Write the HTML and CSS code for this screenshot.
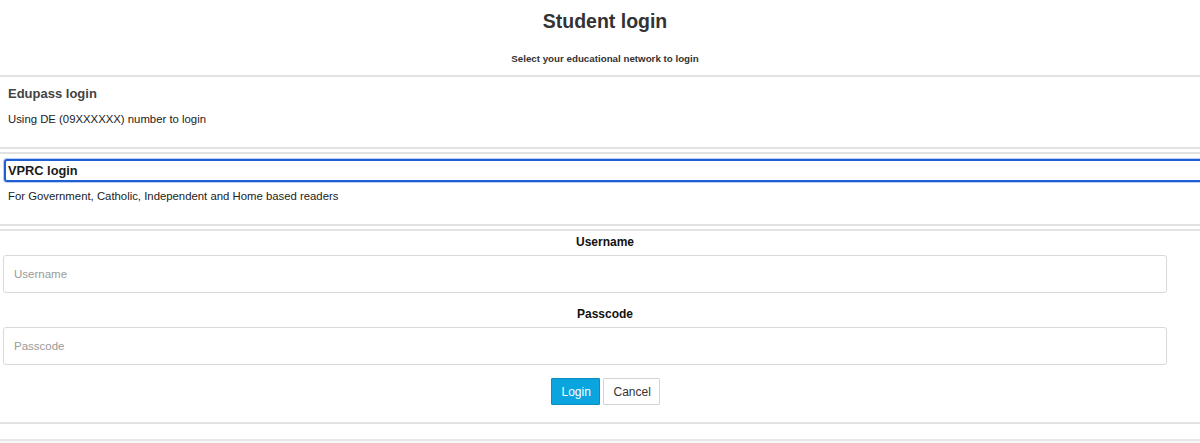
FILE: index.html
```html
<!DOCTYPE html>
<html lang="en">
<head>
<meta charset="utf-8">
<title>Student login</title>
<link rel="stylesheet" href="styles.css">
</head>
<body>
<div class="page">
  <header class="head">
    <h1 class="title">Student login</h1>
    <p class="subtitle">Select your educational network to login</p>
  </header>

  <section class="network">
    <h2 class="network-title">Edupass login</h2>
    <p class="network-desc">Using DE (09XXXXXX) number to login</p>
  </section>

  <section class="network network-active">
    <h2 class="network-title network-title-focus">VPRC login</h2>
    <p class="network-desc">For Government, Catholic, Independent and Home based readers</p>
  </section>

  <section class="login-form">
    <label class="field-label" for="username">Username</label>
    <input class="field-input" id="username" type="text" placeholder="Username">
    <label class="field-label field-label-second" for="passcode">Passcode</label>
    <input class="field-input" id="passcode" type="password" placeholder="Passcode">
    <div class="actions">
      <button class="btn btn-primary" type="button">Login</button>
      <button class="btn btn-default" type="button">Cancel</button>
    </div>
  </section>

  <div class="footer-rule"></div>
</div>
</body>
</html>
```

FILE: styles.css
```css
html {
  overflow-x: hidden;
}

body {
  margin: 0;
  background: #ffffff;
  font-family: "Liberation Sans", Arial, sans-serif;
  color: #222222;
}

.page {
  width: 1210px;
}

.head {
  padding-top: 9px;
  text-align: center;
}

.title {
  margin: 0;
  font-size: 19.5px;
  line-height: 24px;
  font-weight: bold;
  color: #333333;
}

.subtitle {
  margin: 19px 0 0;
  padding-bottom: 9px;
  font-size: 9.75px;
  line-height: 14px;
  font-weight: bold;
  color: #333333;
}

.network {
  border-top: 2px solid #e2e2e2;
  border-bottom: 2px solid #e2e2e2;
  padding: 9px 0 0;
  height: 61px;
  box-sizing: content-box;
}

.network + .network,
.network + .login-form {
  margin-top: 3px;
}

.network-title {
  margin: 0 0 0 8px;
  font-size: 13px;
  line-height: 16px;
  font-weight: bold;
  color: #444444;
}

.network-desc {
  margin: 10px 0 0 8px;
  font-size: 11.35px;
  line-height: 14px;
  color: #222222;
}

.network-active {
  padding-top: 5px;
  height: 65px;
}

.network-title-focus {
  margin-left: 4px;
  padding-left: 2px;
  height: 19px;
  line-height: 19px;
  font-size: 12.8px;
  border: 2px solid #1e5fd4;
  border-radius: 3px;
  box-shadow: 0 0 0 1px #b9d0f4;
  color: #1a1a1a;
}

.network-active .network-desc {
  margin-top: 7px;
}

.login-form {
  border-top: 2px solid #e2e2e2;
  border-bottom: 2px solid #e2e2e2;
  padding: 4px 43px 17px 3px;
  display: flex;
  flex-direction: column;
}

.field-label {
  align-self: center;
  margin-left: 40px;
  font-size: 12px;
  line-height: 14px;
  font-weight: bold;
  color: #111111;
}

.field-label-second {
  margin-top: 14px;
}

.field-input {
  margin-top: 6px;
  height: 38px;
  box-sizing: border-box;
  border: 1px solid #d9d9d9;
  border-radius: 3px;
  padding: 0 10px;
  font-family: "Liberation Sans", Arial, sans-serif;
  font-size: 11.5px;
  color: #222222;
  background: #ffffff;
}

.field-input::placeholder {
  color: #9a9a9a;
}

.actions {
  margin-top: 13px;
  margin-left: 40px;
  display: flex;
  justify-content: center;
  gap: 3px;
}

.btn {
  height: 27px;
  box-sizing: border-box;
  border-radius: 1px;
  font-family: "Liberation Sans", Arial, sans-serif;
  font-size: 12px;
  padding: 0 10px;
  cursor: pointer;
}

.btn-primary {
  width: 49px;
  background: #0aa4de;
  border: 1px solid #0a8cc0;
  color: #ffffff;
}

.btn-default {
  width: 57px;
  background: #ffffff;
  border: 1px solid #d4d4d4;
  color: #333333;
}

.footer-rule {
  margin-top: 15px;
  border-top: 2px solid #e8e8e8;
  height: 4px;
  background: #f7f7f7;
}
```
